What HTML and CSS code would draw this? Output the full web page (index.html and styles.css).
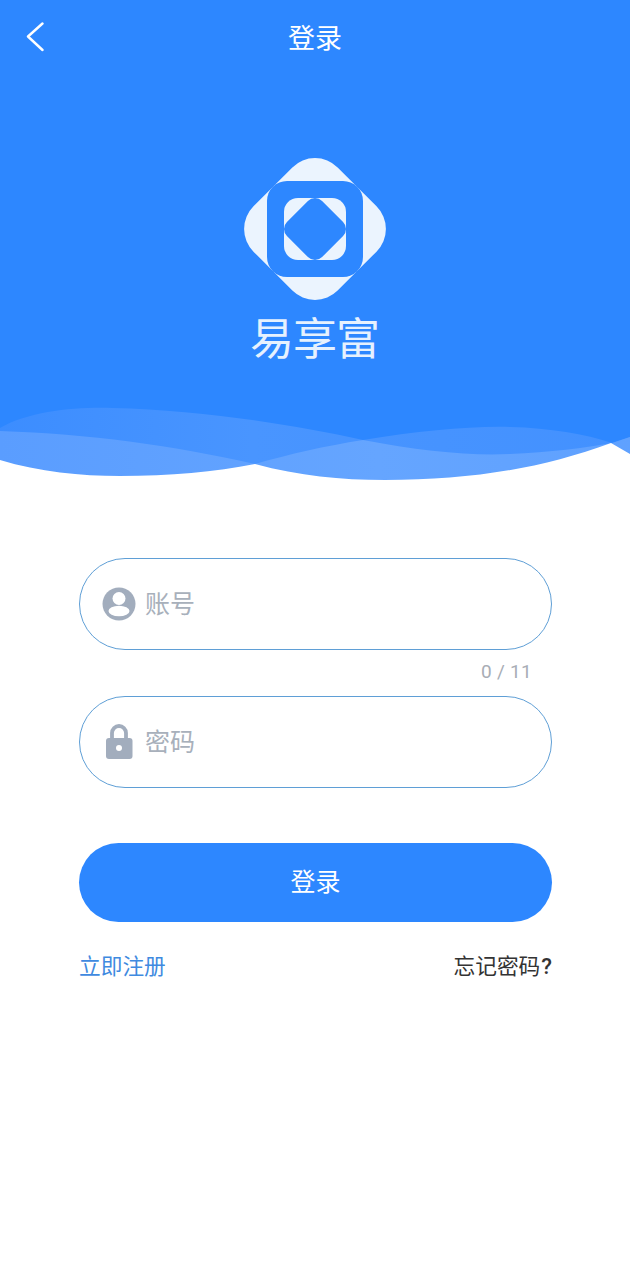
FILE: index.html
```html
<!DOCTYPE html>
<html lang="zh-CN">
<head>
<meta charset="utf-8">
<title>登录</title>
<link rel="stylesheet" href="styles.css">
</head>
<body>
<header class="hero">
  <div class="topbar">
    <svg class="back" width="20" height="30" viewBox="0 0 20 30"><path d="M17.5 1.5 L3 14.5 L17.5 28" fill="none" stroke="#fff" stroke-width="2.4" stroke-linecap="round" stroke-linejoin="round"/></svg>
    <h1 class="title">登录</h1>
  </div>
  <div class="brand">
    <svg class="logo" width="144" height="144" viewBox="0 0 144 144">
      <rect x="12.5" y="12.5" width="119" height="119" rx="32" transform="rotate(45 72 72)" fill="#ebf4fe"/>
      <rect x="24" y="24" width="96" height="96" rx="20" fill="#2d87ff"/>
      <rect x="41" y="41" width="62" height="62" rx="14" fill="#ebf4fe"/>
      <rect x="47.15" y="47.15" width="49.7" height="49.7" rx="10" transform="rotate(45 72 72)" fill="#2d87ff"/>
    </svg>
    <div class="wordmark">易享富</div>
  </div>
  <svg class="wave" width="630" height="90" viewBox="0 390 630 90" preserveAspectRatio="none">
    <defs>
      <linearGradient id="waveBack" x1="0" x2="1" y1="0" y2="0">
        <stop offset="0" stop-color="#3c8dff"/>
        <stop offset="0.4" stop-color="#4995ff"/>
        <stop offset="1" stop-color="#4391ff"/>
      </linearGradient>
      <linearGradient id="waveFront" x1="0" x2="1" y1="0" y2="0">
        <stop offset="0" stop-color="#5a9dff"/>
        <stop offset="0.6" stop-color="#65a5ff"/>
        <stop offset="1" stop-color="#5fa1ff"/>
      </linearGradient>
    </defs>
    <path fill="url(#waveBack)" d="M0 428 C30 411 75 407 112 408 C200 410 290 424 363 440 C420 431 470 426 510 427 C550 428 585 434 612 443 L630 437 L630 480 L0 480 Z"/>
    <path fill="url(#waveFront)" d="M0 431 C90 434 170 445 255 464 C290 454 325 446 363 440 C420 451 470 456 510 454 C550 452 585 448 612 443 L630 437 L630 480 L0 480 Z"/>
    <path fill="#fff" d="M0 460 C40 472 80 476 120 476 C170 476 215 472 255 464 C300 476 340 480 385 480 C470 480 540 469 611 443 L630 454 L630 480 L0 480 Z"/>
  </svg>
</header>
<main class="form">
  <label class="field">
    <svg class="icon" width="34" height="34" viewBox="0 0 34 34">
      <circle cx="17" cy="17" r="16.5" fill="#a2adbd"/>
      <circle cx="17" cy="11.5" r="6.5" fill="#fff"/>
      <ellipse cx="17" cy="24" rx="10.5" ry="5.2" fill="#fff"/>
    </svg>
    <input class="input" type="text" placeholder="账号">
  </label>
  <div class="counter">0 / 11</div>
  <label class="field">
    <svg class="icon" width="34" height="38" viewBox="0 0 34 38">
      <path d="M10 16 V10 a7 7 0 0 1 14 0 V16" fill="none" stroke="#a2adbd" stroke-width="3.8"/>
      <rect x="4" y="15" width="26.5" height="21" rx="3" fill="#a2adbd"/>
      <circle cx="17" cy="25" r="3" fill="#fff"/>
    </svg>
    <input class="input" type="password" placeholder="密码">
  </label>
  <button class="submit" type="button">登录</button>
  <div class="links">
    <a class="register">立即注册</a>
    <a class="forgot">忘记密码<span class="mark">?</span></a>
  </div>
</main>
</body>
</html>
```
FILE: styles.css
```css
* { box-sizing: border-box; }
html, body { margin: 0; padding: 0; }
body {
  width: 630px;
  height: 1280px;
  overflow: hidden;
  background: #fff;
  font-family: "Noto Sans CJK SC", "Noto Sans", sans-serif;
}
.hero {
  background: #2d87ff;
  height: 480px;
  display: flex;
  flex-direction: column;
}
.topbar {
  height: 74px;
  display: flex;
  align-items: center;
  justify-content: center;
  position: relative;
}
.back { position: absolute; left: 25px; top: 22px; }
.title {
  margin: 0;
  color: #fff;
  font-size: 27px;
  font-weight: 400;
  line-height: 72px;
}
.brand {
  height: 316px;
  display: flex;
  flex-direction: column;
  align-items: center;
  padding-top: 83px;
  margin-left: -1px;
}
.logo { display: block; flex: none; }
.wordmark {
  margin-top: 5px;
  font-size: 44px;
  line-height: 60px;
  font-weight: 400;
  letter-spacing: -1px;
  color: #e6f1fe;
}
.wave { display: block; flex: none; }
.form {
  display: flex;
  flex-direction: column;
  margin: 78px 78px 0 79px;
}
.field {
  height: 92px;
  border: 1px solid #5f9fd6;
  border-radius: 46px;
  display: flex;
  align-items: center;
  padding-left: 22px;
  gap: 9px;
}
.icon { flex: none; }
.input {
  flex: 1;
  min-width: 0;
  border: 0;
  outline: 0;
  background: transparent;
  padding: 0 0 5px;
  font-family: inherit;
  font-size: 25px;
  color: #333;
}
.input::placeholder { color: #a8b0bb; opacity: 1; }
.counter {
  height: 46px;
  line-height: 44px;
  text-align: right;
  padding-right: 20px;
  color: #a8adb5;
  font-family: "Roboto", sans-serif;
  font-size: 19px;
  letter-spacing: 0.3px;
}
.submit {
  margin-top: 55px;
  height: 79px;
  border: 0;
  border-radius: 40px;
  background: #2d87ff;
  color: #fff;
  font-family: inherit;
  font-size: 25px;
  padding: 0 0 6px;
}
.links {
  margin-top: 27px;
  display: flex;
  justify-content: space-between;
  font-size: 21.7px;
  line-height: 32px;
}
.register { color: #3f8ae0; }
.forgot { color: #333; }
.mark { font-family: "Roboto", sans-serif; font-weight: 500; font-size: 22px; margin-left: 1px; }
```
